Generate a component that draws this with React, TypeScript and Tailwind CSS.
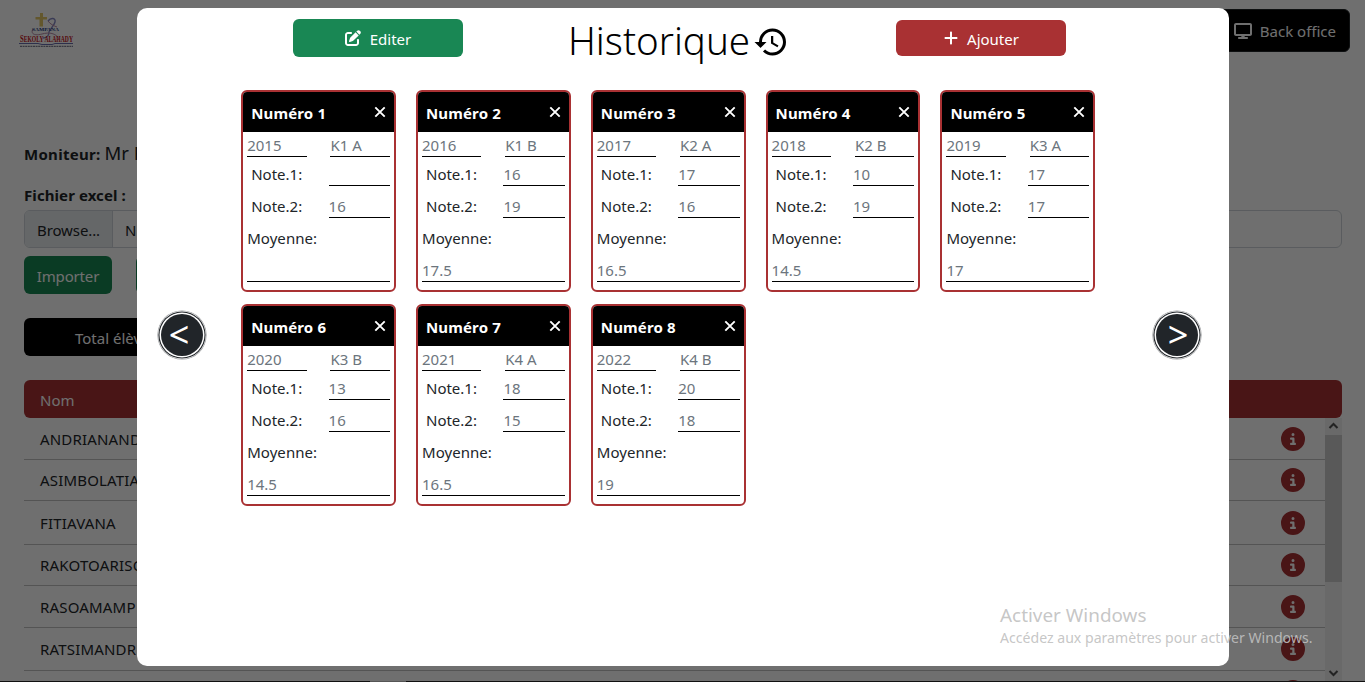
import { FaCircleInfo, FaDisplay, FaPenToSquare, FaPlus } from "react-icons/fa6";
import { MdHistory } from "react-icons/md";

type Entry = {
  year: string;
  level: string;
  note1: string;
  note2: string;
  average: string;
};

const entries: Entry[] = [
  { year: "2015", level: "K1 A", note1: "", note2: "16", average: "" },
  { year: "2016", level: "K1 B", note1: "16", note2: "19", average: "17.5" },
  { year: "2017", level: "K2 A", note1: "17", note2: "16", average: "16.5" },
  { year: "2018", level: "K2 B", note1: "10", note2: "19", average: "14.5" },
  { year: "2019", level: "K3 A", note1: "17", note2: "17", average: "17" },
  { year: "2020", level: "K3 B", note1: "13", note2: "16", average: "14.5" },
  { year: "2021", level: "K4 A", note1: "18", note2: "15", average: "16.5" },
  { year: "2022", level: "K4 B", note1: "20", note2: "18", average: "19" },
];

const students = [
  { name: "ANDRIANAND", height: "h-[42px]" },
  { name: "ASIMBOLATIA", height: "h-[41px]" },
  { name: "FITIAVANA", height: "h-[44px]" },
  { name: "RAKOTOARISO", height: "h-[41px]" },
  { name: "RASOAMAMP", height: "h-[42px]" },
  { name: "RATSIMANDR", height: "h-[43px]" },
  { name: "", height: "h-[43px]" },
];

function Logo() {
  return (
    <svg className="h-9 w-14 overflow-visible" viewBox="0 0 56 36" fill="none">
      <path d="M21 1h3v4h4v2.5h-4v7h-3.500v-7h-4V5H21z" fill="#e3c867" />
      <path d="M29 9c3-4 8-3 7 1s-5 7-6 10c0 4-3 6-6 6" stroke="#8587c4" strokeWidth="1.4" />
      <path d="M29 9c2 3 6 5 9 6M14 17c-3 5 2 7 9 5s14-1 17 5" stroke="#b88aa6" strokeWidth="1" />
      <text x="13" y="19" fontFamily="Liberation Serif, serif" fontSize="5" fontWeight="700" fill="#20367e" textLength="27" lengthAdjust="spacingAndGlyphs">SAMPANA</text>
      <text x="1" y="30" fontFamily="Liberation Serif, serif" fontWeight="700" fill="#c5141c" fontSize="10" textLength="53" lengthAdjust="spacingAndGlyphs">
        S<tspan fontSize="8.500">EKOLY ALAHADY</tspan>
      </text>
      <path d="M0 31.5h19l4 1h10l3-1h18" stroke="#6b6fae" strokeWidth="1" />
      <path d="M1 34.3h53" stroke="#5f6078" strokeWidth="1" strokeDasharray="2 .6" />
    </svg>
  );
}

function Field({ value, className }: { value: string; className: string }) {
  return <div className={`border-b border-black text-[#6c757d] ${className}`}>{value}</div>;
}

function EntryCard({ entry, index }: { entry: Entry; index: number }) {
  return (
    <article className="h-[202px] overflow-hidden rounded-md border-2 border-[#a93133] bg-white">
      <header className="flex h-10 items-center justify-between bg-black pr-1.5 pl-2 text-white">
        <h2 className="pt-0.5 text-[15px] font-bold tracking-[0.15px]">Numéro {index}</h2>
        <svg className="size-4" viewBox="0 0 16 16" fill="none">
          <path d="m3.300 3.300 9.400 9.400M12.700 3.300l-9.400 9.400" stroke="currentColor" strokeWidth="1.9" />
        </svg>
      </header>
      <div className="px-1">
        <div className="flex justify-between">
          <Field value={entry.year} className="h-[25px] w-[59.500px] leading-[27px]" />
          <Field value={entry.level} className="h-[25px] w-[59.500px] leading-[27px]" />
        </div>
        <div className="flex h-[29px] justify-between">
          <span className="pl-1 leading-[35px]">Note.1:</span>
          <Field value={entry.note1} className="h-[29px] w-[61.4px] leading-[35px]" />
        </div>
        <div className="flex h-8 justify-between">
          <span className="pl-1 leading-[41px]">Note.2:</span>
          <Field value={entry.note2} className="h-8 w-[61.4px] leading-[41px]" />
        </div>
        <div className="h-8 leading-[41px] tracking-[0.05px]">Moyenne:</div>
        <Field value={entry.average} className="h-8 leading-[41px]" />
      </div>
    </article>
  );
}

function RoundButton({ label, nudge }: { label: string; nudge: string }) {
  return (
    <button className="flex size-12 shrink-0 items-center justify-center">
      <span
        className={`flex size-[42px] items-center justify-center rounded-full bg-[#212529] text-[36px] leading-none text-white shadow-[0_0_0_1.5px_#fff,0_0_0_2.6px_#212529,0_0_0_3px_#fff,0_0_0_3.6px_#9a9c9e] ${nudge}`}
      >
        {label}
      </span>
    </button>
  );
}

function ClassPage() {
  return (
    <div className="h-full overflow-hidden bg-white">
      <div className="flex h-[60px] items-start justify-between pr-[15px] pl-[19px]">
        <div className="pt-3">
          <Logo />
        </div>
        <button className="mt-[9px] flex h-[43px] w-[150px] items-center justify-end gap-2 rounded-md border border-[#212529] bg-black pr-[13px] text-white">
          <FaDisplay className="size-[18px]" />
          <span className="pt-0.5">Back office</span>
        </button>
      </div>
      <div className="px-6 pr-[23px]">
        <div className="flex h-[120px] items-end gap-1 pb-[11px]">
          <b className="leading-[30px] tracking-[0.3px]">Moniteur:</b>
          <span className="text-[18.5px] leading-8">Mr R</span>
        </div>
        <b className="block h-[30px] leading-[30px] tracking-[0.08px]">Fichier excel :</b>
        <div className="flex h-[38px] overflow-hidden rounded-md border border-[#ced4da]">
          <span className="w-[88px] border-r border-[#ced4da] bg-[#e9ecef] pl-3 leading-[38px] tracking-[-0.1px]">Browse...</span>
          <span className="pl-3 leading-[38px]">N</span>
        </div>
        <div className="mt-2 flex gap-6">
          <button className="h-[38px] w-[88px] rounded-md bg-[#198754] pt-0.5 tracking-[-0.15px] text-white">Importer</button>
          <div className="h-[38px] w-[100px] rounded-md bg-[#198754]" />
        </div>
        <div className="mt-6 h-[38px] w-[250px] rounded-md bg-black pl-[51px] leading-10 text-white">Total élèv</div>
        <div className="mt-6 h-[38px] rounded-md bg-[#a93133] pl-4 leading-10 text-white">Nom</div>
        <div className="flex h-[263px]">
          <div className="grow overflow-hidden">
            {students.map((s) => (
              <div key={s.height + s.name} className={`flex items-center justify-between border-b border-[#c0c0c0] pr-5 pl-4 ${s.height}`}>
                <span className="pt-px tracking-[0.18px]">{s.name}</span>
                <FaCircleInfo className="size-6 text-[#a93133]" />
              </div>
            ))}
          </div>
          <div className="flex w-[17px] flex-col justify-between bg-[#f0f0f0]">
            <div>
              <svg className="h-[17px] w-[17px]" viewBox="0 0 17 17" fill="none">
                <path d="M4.5 10 8.5 6l4 4" stroke="#505050" strokeWidth="2" />
              </svg>
              <div className="h-[147px] bg-[#cdcdcd]" />
            </div>
            <svg className="h-[17px] w-[17px]" viewBox="0 0 17 17" fill="none">
              <path d="m4.5 7 4 4 4-4" stroke="#505050" strokeWidth="2" />
            </svg>
          </div>
        </div>
      </div>
    </div>
  );
}

export default function App() {
  return (
    <div className="relative h-[682px] w-[1365px] overflow-hidden font-['Noto_Sans',sans-serif] text-[15px] text-[#212529]">
      <ClassPage />
      <div className="absolute inset-0 flex justify-center bg-black/[0.565] pt-2 pl-px">
        <section className="flex h-[658px] w-[1092px] flex-col rounded-[10px] bg-white">
          <div className="flex h-[82px] items-start pl-[156px]">
            <button className="mt-[11px] flex h-[38px] w-[170px] items-center justify-center gap-2 rounded-md bg-[#198754] text-white">
              <FaPenToSquare className="mr-px size-4" />
              <span className="pt-0.5">Editer</span>
            </button>
            <h1 className="ml-[105px] flex h-[66px] w-[222px] items-center text-[38.5px] font-[350] text-black">
              <span className="w-[185px] whitespace-nowrap">Historique</span>
              <MdHistory className="mt-px size-9 shrink-0" />
            </h1>
            <button className="mt-3 ml-[106px] flex h-9 w-[170px] items-center justify-center gap-2 rounded-md bg-[#a93133] text-white">
              <FaPlus className="size-4" />
              <span className="pt-0.5">Ajouter</span>
            </button>
          </div>
          <div className="flex items-start pl-[21px]">
            <div className="mt-[221px]">
              <RoundButton label="<" nudge="pr-[6px]" />
            </div>
            <div className="ml-[35.2px] grid w-[854px] grid-cols-5 gap-x-5 gap-y-3">
              {entries.map((entry, i) => (
                <EntryCard key={entry.year} entry={entry} index={i + 1} />
              ))}
            </div>
            <div className="mt-[221px] ml-[57.8px]">
              <RoundButton label=">" nudge="pl-0.5" />
            </div>
          </div>
        </section>
      </div>
      <div className="absolute top-[601px] left-[1000px] whitespace-nowrap text-[#c0c0c0]/90">
        <div className="text-[18.9px] leading-7">Activer Windows</div>
        <div className="pt-px text-[14.1px] leading-4">Accédez aux paramètres pour activer Windows.</div>
      </div>
      <div className="absolute inset-x-0 bottom-0 flex h-px bg-[#101010]">
        <div className="ml-[370px] w-9 bg-[#555555]" />
      </div>
    </div>
  );
}
